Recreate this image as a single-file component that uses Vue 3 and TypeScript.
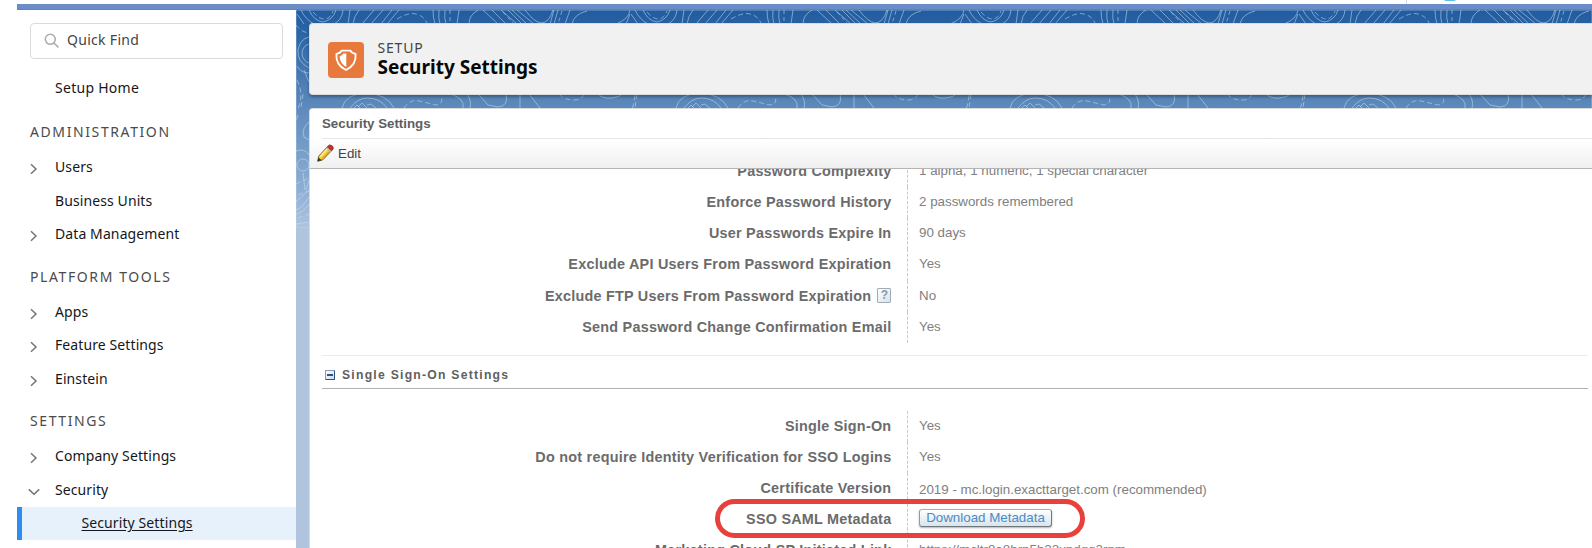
<script setup lang="ts">
interface NavItem { label: string; chevron?: 'right' | 'down'; nested?: boolean }
interface NavGroup { title: string; items: NavItem[] }
interface Row { label: string; value?: string; help?: boolean; button?: string; cls?: string }

const groups: NavGroup[] = [
  { title: 'ADMINISTRATION', items: [
    { label: 'Users', chevron: 'right' },
    { label: 'Business Units' },
    { label: 'Data Management', chevron: 'right' },
  ] },
  { title: 'PLATFORM TOOLS', items: [
    { label: 'Apps', chevron: 'right' },
    { label: 'Feature Settings', chevron: 'right' },
    { label: 'Einstein', chevron: 'right' },
  ] },
  { title: 'SETTINGS', items: [
    { label: 'Company Settings', chevron: 'right' },
    { label: 'Security', chevron: 'down' },
    { label: 'Security Settings', nested: true },
  ] },
]

const passwordRows: Row[] = [
  { label: 'Password Complexity', value: '1 alpha, 1 numeric, 1 special character' },
  { label: 'Enforce Password History', value: '2 passwords remembered' },
  { label: 'User Passwords Expire In', value: '90 days' },
  { label: 'Exclude API Users From Password Expiration', value: 'Yes' },
  { label: 'Exclude FTP Users From Password Expiration', value: 'No', help: true },
  { label: 'Send Password Change Confirmation Email', value: 'Yes' },
]

const ssoRows: Row[] = [
  { label: 'Single Sign-On', value: 'Yes' },
  { label: 'Do not require Identity Verification for SSO Logins', value: 'Yes' },
  { label: 'Certificate Version', value: '2019 - mc.login.exacttarget.com (recommended)', cls: 'low' },
  { label: 'SSO SAML Metadata', button: 'Download Metadata' },
  { label: 'Marketing Cloud SP Initiated Link', value: 'https://mcltr8a8hrp5h23xndgg2rpm' },
]
</script>

<template>
  <div class="app">
    <header class="global">
      <i class="divider"></i>
      <i class="avatar"></i>
    </header>
    <div class="bar"></div>
    <div class="body">
      <aside class="side">
        <label class="search">
          <svg width="16" height="16" viewBox="0 0 16 16"><circle cx="6.3" cy="6.3" r="5" /><path d="M10 10L14.4 14.4" /></svg>
          <span>Quick Find</span>
        </label>
        <a class="item home"><span class="lbl">Setup Home</span></a>
        <template v-for="g in groups" :key="g.title">
          <h3>{{ g.title }}</h3>
          <a v-for="it in g.items" :key="it.label" class="item" :class="{ active: it.nested }">
            <svg v-if="it.chevron === 'right'" class="chev" width="14" height="14" viewBox="0 0 14 14"><path d="M4 2.2L9 7L4 11.8" /></svg>
            <svg v-else-if="it.chevron === 'down'" class="chev" width="14" height="14" viewBox="0 0 14 14"><path d="M1.8 4.4L7 9.2L12.2 4.4" /></svg>
            <span class="lbl">{{ it.label }}</span>
          </a>
        </template>
      </aside>

      <main class="main">
        <svg class="topo" width="1296" height="218" viewBox="0 0 1296 218">
          <defs>
            <pattern id="contours" width="334" height="218" patternUnits="userSpaceOnUse">
              <path d="M1 4L8 14M5 0Q9 9 18 14M13 0Q18 11 27 12Q37 10 40 0M38 14Q46 10 47 0M54 0L52 14M63 0Q58 6 57 14" />
              <path stroke-dasharray="5 3" d="M17 2Q24 10 30 9Q35 7 37 1M101 9Q113 2 120 4Q128 6 131 13" />
              <path d="M66 14L78 0M75 14L87 0M85 14L96 0M91 14L103 0" />
              <path d="M137 0Q137 8 139 14M143 0Q142 8 144 14M149 0Q148 8 150 14M163 0L161 14M182 0Q173 5 173 14" />
              <path stroke-dasharray="4 3" d="M154 0L154 14M207 2L218 14M266 1L262 14" />
              <path d="M187 0L202 14M196 0L210 14M205 0L221 14M212 0L226 14M216 0L231 14M221 0L238 14M229 0Q238 12 245 13Q253 13 257 0M254 14L258 0M258 14L262 0M269 14L274 0M276 14Q278 4 291 1M320 14Q333 9 334 0M330 14L334 4" />
              <path d="M46 98Q49 84 70 83Q91 84 98 98M54 98Q62 88 71 88Q84 88 91 98M58 98L61 95L64 98M62 97L66 93L71 98M71 95L75 94L80 98" />
              <path stroke-dasharray="5 3" d="M108 98Q114 89 123 91L140 95Q148 94 145 86M263 84Q268 90 278 90Q286 90 288 84M341 84L339 98M7 84L5 98" />
              <path d="M155 84Q169 89 167 98M171 84Q176 91 174 98M182 84L192 95L202 97Q213 96 210 84M224 84V98M233 84L244 98M302 84Q307 89 316 88Q324 87 326 84" />
              <path d="M13 27Q4 29 2 40Q1 52 13 58M13 34Q6 36 6 44Q7 51 13 53M13 63Q5 63 1 56M8 60L13 72M13 112Q5 119 8 127L13 130M0 141Q9 138 13 145M1 155A6 6 0 1 0 13 155A6 6 0 1 0 1 155M7 163L9 180M13 170L10 180" />
              <path stroke-dasharray="5 3" d="M0 15Q5 22 13 23M1 70Q8 84 2 99M2 105L0 112M0 174L13 168M2 185L13 181M2 208L13 204" />
              <path d="M0 192Q5 187 13 180M0 200Q6 198 13 187M0 204Q7 203 13 194M0 214L13 212" />
            </pattern>
          </defs>
          <rect width="1296" height="218" fill="url(#contours)" />
        </svg>

        <section class="head">
          <div class="badge">
            <svg width="24" height="24" viewBox="0 0 24 24">
              <path class="ring" d="M7.500 2.600H16.500Q17.600 5.200 21.600 5.800C22.200 13 18.500 19 12 22C5.500 19 1.800 13 2.400 5.800Q6.400 5.200 7.500 2.600Z" />
              <path class="fillh" d="M12.300 5.600H9.200Q8.300 7.600 5.700 8.200C5.700 12.800 8 16.400 12.300 18.800Z" />
            </svg>
          </div>
          <div>
            <div class="eyebrow">SETUP</div>
            <h1>Security Settings</h1>
          </div>
        </section>

        <section class="card">
          <h2>Security Settings</h2>
          <div class="toolbar">
            <svg width="17" height="18" viewBox="0 0 17 18">
              <path d="M0.800 17.200L1.600 12.300L11.300 1.800L15.600 5.600L5.800 15.800Z" fill="#f6cf3c" stroke="#6b5420" stroke-width=".9" />
              <path d="M3.300 12.400L11.600 3.600" stroke="#fff0a0" stroke-width="1.500" />
              <path d="M5.300 14.700L14 5.800" stroke="#e0a01c" stroke-width="1.200" />
              <path d="M10.200 3.100L12.600 0.800Q16.400 1.200 16.500 4.600L14.300 6.900Z" fill="#c3342f" stroke="#8b2525" stroke-width=".6" />
              <path d="M9.600 3.800L13.600 7.500" stroke="#b9b9b9" stroke-width="1.300" />
              <path d="M0.500 17.500L1.400 13.400L4.700 16.300Z" fill="#3f3420" />
            </svg>
            <span>Edit</span>
          </div>
          <div class="scroll">
            <div class="rows first">
              <div v-for="r in passwordRows" :key="r.label" class="row">
                <div class="k">{{ r.label }}<span v-if="r.help" class="help">?</span></div>
                <div class="v">{{ r.value }}</div>
              </div>
            </div>
            <div class="sect">
              <span class="toggle"></span>
              <span>Single Sign-On Settings</span>
            </div>
            <div class="rows sso">
              <div v-for="r in ssoRows" :key="r.label" class="row">
                <div class="k">{{ r.label }}</div>
                <div class="v" :class="r.cls">
                  <button v-if="r.button">{{ r.button }}</button>
                  <template v-else>{{ r.value }}</template>
                </div>
              </div>
            </div>
          </div>
        </section>
      </main>
    </div>
    <div class="callout"></div>
  </div>
</template>

<style>
html, body { margin: 0; overflow: hidden; background: #fff; }
</style>

<style scoped>
* { box-sizing: border-box; }
.app { position: relative; height: 548px; display: flex; flex-direction: column; overflow: hidden; background: #fff; font-family: "Noto Sans", sans-serif; padding-left: 17px; }
.global { height: 4px; flex: none; display: flex; padding-left: 1389px; overflow: hidden; }
.divider { width: 1px; height: 4px; background: #cfdbe6; }
.avatar { width: 12px; height: 2px; margin: -1px 0 0 37px; background: #62c0e2; border-radius: 0 0 6px 6px; }
.bar { height: 6px; flex: none; background: #6a8cc7; border-bottom: 1px solid #5f83c1; }
.body { flex: 1; min-height: 0; display: flex; }

.side { width: 279px; flex: none; padding-top: 13px; color: #16161a; }
.search { display: flex; align-items: center; gap: 7px; width: 253px; height: 36px; margin-left: 13px; padding: 0 0 3px 13px; border: 1px solid #dddbda; border-radius: 4px; font-size: 14px; letter-spacing: .3px; color: #444; }
.search svg { fill: none; stroke: #b0adab; stroke-width: 1.6; margin-top: 3px; }
.item { display: flex; align-items: center; height: 33.4px; padding: 0 0 2px 10px; font-size: 14px; letter-spacing: .1px; }
.item .lbl { margin-left: 28px; }
.chev { fill: none; stroke: #747474; stroke-width: 1.5; margin: 5px 0 0; }
.chev + .lbl { margin-left: 14px; }
.home { margin-top: 14.4px; padding-bottom: 5px; letter-spacing: .28px; }
h3 { margin: 0; height: 44.4px; padding: 15.2px 0 0 13px; font-size: 14px; line-height: 19px; font-weight: 400; letter-spacing: 1.6px; color: #4b4b4b; }
.active { background: #e6f1fc; border-left: 5px solid #2f8df0; padding-left: 31.5px; text-decoration: underline; text-underline-offset: 2px; }

.main { position: relative; flex: 1; min-width: 0; display: flex; flex-direction: column; padding: 13px 0 0 13px; background: linear-gradient(#215ca0 0, #2f68a8 30px, #6590bf 110px, #8eafd4 180px, #b0c4de 220px, #b0c4de 100%); }
.topo { position: absolute; left: 0; top: 0; fill: none; stroke: rgba(205, 224, 243, .52); stroke-width: 1; }
.head { position: relative; flex: none; height: 72px; display: flex; gap: 13.5px; padding: 18px 0 0 18px; background: #f1f1f1; border: 1px solid #dcdcdc; border-right: 0; border-radius: 4px 0 0 4px; box-shadow: 0 2px 3px rgba(0, 0, 0, .3); margin-bottom: 13px; }
.badge { width: 36px; height: 36px; flex: none; border-radius: 4px; background: #e8793c; display: flex; align-items: center; justify-content: center; }
.ring { fill: none; stroke: #fff; stroke-width: 1.8; stroke-linejoin: round; }
.fillh { fill: #fff; }
.eyebrow { font-size: 14px; line-height: 18px; letter-spacing: .8px; color: #444; margin-top: -3px; }
h1 { margin: 0; font-size: 19px; line-height: 20px; font-weight: 700; color: #080707; }

.card { position: relative; flex: 1; min-height: 0; display: flex; flex-direction: column; background: #fff; border: 1px solid #dddbda; border-width: 1px 0 0 1px; border-radius: 4px 0 0 0; font-family: "Liberation Sans", Arial, sans-serif; }
h2 { margin: 0 0 0 12px; height: 30px; flex: none; padding-top: 2px; line-height: 26px; font-size: 13.3px; font-weight: 700; color: #5e5e5e; border-bottom: 1px solid #e5e5e5; }
.toolbar { flex: none; height: 30px; display: flex; align-items: center; gap: 4.5px; padding-left: 6.500px; font-size: 13.35px; color: #444; background: linear-gradient(#fff, #f0f0f0); border-bottom: 1px solid #b4b4b4; }
.toolbar svg { margin-top: -2px; }
.scroll { flex: 1; min-height: 0; overflow: hidden; display: flex; flex-direction: column; }
.rows { flex: none; }
.first { margin-top: -13.2px; }
.row { display: flex; height: 31.2px; }
.sso .row { height: 31px; }
.k { width: 598px; flex: none; padding-right: 15.6px; text-align: right; line-height: 31.2px; font-size: 14.4px; font-weight: 700; letter-spacing: .24px; color: #6b6b6b; white-space: nowrap; border-right: 1px dashed #c9c9c9; }
.v { padding: 0 0 0 11px; line-height: 29.8px; font-size: 13.35px; color: #808080; white-space: nowrap; }
.low { line-height: 33.5px; }
.help { display: inline-block; width: 14px; height: 15px; margin-left: 6px; border: 1px solid #a3acb4; border-radius: 1px; background: linear-gradient(135deg, #fff, #d5e3ee); font-size: 12px; line-height: 13px; letter-spacing: 0; text-align: center; color: #8c98a3; position: relative; top: -2px; }
.sect { flex: none; display: flex; align-items: center; gap: 7px; height: 33.6px; margin: 12.5px 4px 21.7px 12px; padding: 6px 0 0 3px; border-top: 1px solid #ebebeb; border-bottom: 1px solid #b0b0b0; font-size: 12.2px; font-weight: 700; letter-spacing: 1.24px; color: #5f5f5f; }
.toggle { width: 10px; height: 10px; border: 1px solid #8298b5; border-right-color: #2f5482; border-bottom-color: #2f5482; background: linear-gradient(#31547f, #31547f) center / 6px 2px no-repeat, linear-gradient(135deg, #fff, #cddbed); border-radius: 1px; }
button { display: block; width: 133px; height: 18px; margin-top: 5px; padding: 0; border: 1px solid #6f777e; border-top-color: #a9afb4; border-left-color: #949a9f; border-radius: 3px; background: linear-gradient(#fff, #d9e4ec); box-shadow: 0 1px 2px rgba(0, 0, 0, .3); font: 13.35px/16px "Liberation Sans", Arial, sans-serif; color: #4a8cc6; text-align: center; }
.callout { position: absolute; left: 715px; top: 499px; width: 369.5px; height: 39px; border: 5.5px solid #e8403a; border-radius: 19.5px; }
</style>
